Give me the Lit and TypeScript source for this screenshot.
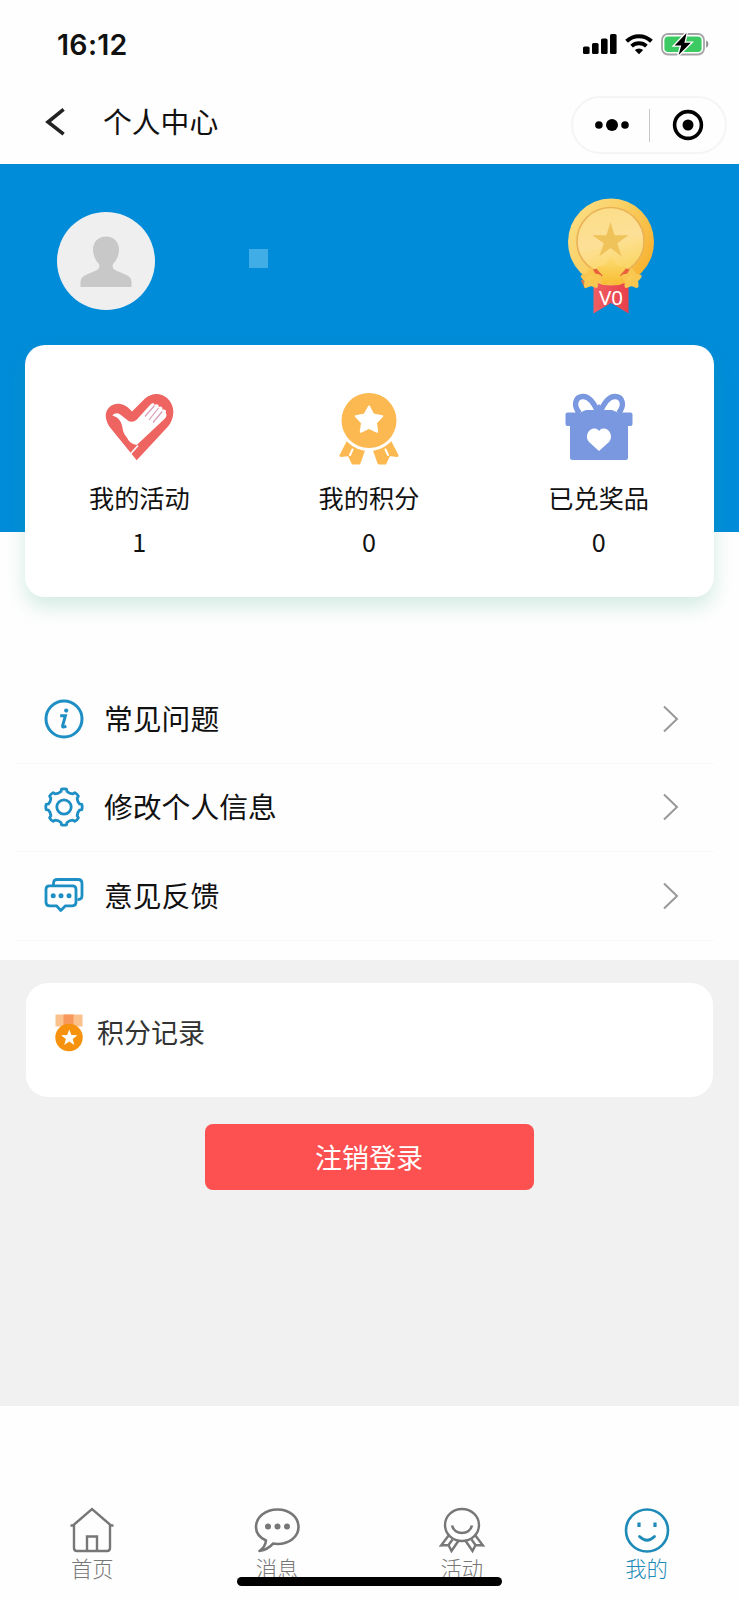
import { LitElement, html, css, svg } from "lit";
import { customElement } from "lit/decorators.js";

const star = (cx: number, cy: number, R: number, r = R * 0.42) => {
  const pts: string[] = [];
  for (let i = 0; i < 10; i++) {
    const a = -Math.PI / 2 + (i * Math.PI) / 5;
    const q = i % 2 ? r : R;
    pts.push(`${(cx + q * Math.cos(a)).toFixed(2)},${(cy + q * Math.sin(a)).toFixed(2)}`);
  }
  return pts.join(" ");
};

const gearPath = (() => {
  let d = "";
  for (let i = 0; i < 8; i++) {
    const at = (deg: number, q: number) => {
      const a = ((i * 45 + deg - 90) * Math.PI) / 180;
      return `${(20 + q * Math.cos(a)).toFixed(2)} ${(20 + q * Math.sin(a)).toFixed(2)}`;
    };
    d += `${i ? "L" : "M"}${at(-8, 18)} Q${at(0, 18.6)} ${at(8, 18)} L${at(11, 15.8)} Q${at(22.5, 14.4)} ${at(34, 15.8)} `;
  }
  return d + "Z";
})();

const signal = svg`<svg width="34" height="22" viewBox="0 0 34 22">
  <rect x="0" y="13.5" width="6.600" height="7.5" rx="1.6"/><rect x="9" y="10" width="6.600" height="11" rx="1.6"/>
  <rect x="18" y="5.5" width="6.600" height="15.5" rx="1.6"/><rect x="27" y="1" width="6.600" height="20" rx="1.6"/></svg>`;

const wifi = svg`<svg width="28" height="22" viewBox="0 0 28 22" fill="none" stroke="#000">
  <path d="M1.6 8.2a17.8 17.8 0 0 1 24.8 0" stroke-width="4"/>
  <path d="M6.6 13.2a10.8 10.8 0 0 1 14.8 0" stroke-width="3.8"/>
  <path d="M14 21.2l-4.2-4.1a6 6 0 0 1 8.4 0z" fill="#000" stroke="none"/></svg>`;

const battery = svg`<svg width="48" height="24" viewBox="0 0 48 24">
  <rect x="1" y="2" width="42" height="20.5" rx="6" fill="#fff" stroke="#a6a6a6" stroke-width="1.8"/>
  <rect x="3.4" y="4.4" width="37.2" height="15.7" rx="3.8" fill="#3ccb62"/>
  <path d="M45.2 8.6c2.8.9 2.8 6.2 0 7.2z" fill="#8d8d8d"/>
  <path d="M25.6 1L13.6 13.4h6.6L17.6 23 29.8 10.8h-6.4z" fill="#000" stroke="#fff" stroke-width="2.6" paint-order="stroke"/></svg>`;

const back = svg`<svg class="back" width="20" height="30" viewBox="0 0 20 30" fill="none" stroke="#222" stroke-width="3.6">
  <path d="M18.6 2.4L3 15l15.6 12.2"/></svg>`;

const more = svg`<svg width="34" height="14" viewBox="0 0 34 14"><circle cx="3.9" cy="7" r="3.8"/><circle cx="17" cy="7" r="6"/><circle cx="30" cy="7" r="3.8"/></svg>`;
const target = svg`<svg width="32" height="32" viewBox="0 0 32 32"><circle cx="16" cy="16" r="13.4" fill="none" stroke="#000" stroke-width="3.6"/><circle cx="16" cy="16" r="5.5"/></svg>`;

const person = svg`<svg width="52" height="52" viewBox="0 0 52 52" fill="#c8c8c8">
  <path d="M26 .5c8 0 13 5.700 13 13 0 6-2.600 11-6 14.500-1 3.500 0 5 3 6.500l10.500 4.500c3.500 1.700 5 4 5 7.500v4.500H.500V46.500c0-3.500 1.500-5.800 5-7.500L16 34.500c3-1.500 4-3 3-6.500-3.400-3.500-6-8.500-6-14.500 0-7.300 5-13 13-13z"/></svg>`;

const vipMedal = svg`<svg width="88" height="118" viewBox="0 0 88 118">
  <defs>
    <linearGradient id="rim" x1="0" y1="0" x2="1" y2="0.6"><stop offset="0" stop-color="#fbe08a"/><stop offset=".5" stop-color="#fad065"/><stop offset="1" stop-color="#f7b434"/></linearGradient>
    <linearGradient id="face" x1="0" y1="0" x2="0.3" y2="1"><stop offset="0" stop-color="#fbdc85"/><stop offset=".6" stop-color="#fde097"/><stop offset="1" stop-color="#fbd768"/></linearGradient>
    <linearGradient id="gold" x1="0" y1="0" x2="1" y2="1"><stop offset="0" stop-color="#fbd96a"/><stop offset="1" stop-color="#f7bd3d"/></linearGradient>
    <linearGradient id="gold-mid" x1="0" y1="0" x2="0" y2="1"><stop offset="0" stop-color="#fbd96e"/><stop offset="1" stop-color="#f8bf34"/></linearGradient>
    <linearGradient id="band" x1="0" y1="0" x2="1" y2="0"><stop offset="0" stop-color="#ef5f62"/><stop offset="1" stop-color="#e9404b"/></linearGradient>
  </defs>
  <path d="M26.500 82h35v33.500L44 105 26.500 115.500z" fill="url(#band)"/>
  <ellipse cx="44" cy="44" rx="43" ry="43.500" fill="url(#rim)"/>
  <circle cx="43.500" cy="43" r="33.500" fill="url(#face)" stroke="#eab256" stroke-width="1.600"/>
  <polygon points="${star(43.500, 43, 19, 7)}" fill="#efc25a"/>
  <path d="M25 72l8-2.500 5 6-6 5zM64 72l-8-2.500-5 6 6 5z" fill="#e8603c"/>
  <path d="M15 82l4 8" stroke="#dd7a4a" stroke-width="2.500"/>
  <g stroke-width="4" stroke-linejoin="round">
    <polygon points="${star(44.200, 74.500, 13, 7)}" fill="url(#gold-mid)" stroke="url(#gold-mid)"/>
    <polygon points="${star(24, 81, 8.600, 4.800)}" fill="url(#gold)" stroke="#f9c650"/>
    <polygon points="${star(64.500, 81, 8.600, 4.800)}" fill="url(#gold)" stroke="#f9c650"/>
  </g></svg>`;

const heartHand = svg`<svg class="stat-icon" width="74" height="74" viewBox="0 0 74 74">
  <path d="M34.700 68.300L7.700 35C-1 22 6 12 16 11.700 22 11.500 26.500 15.500 30 19.500L43 6.500C50 .5 58.500.5 65 6c8 7 8.500 19.500 1 28.500z" fill="#ee6460"/>
  <path d="M10.400 23.500c2-2.500 5-3 7.500-1.200l9 7c3.600 1.200 7-.3 9.600-3.600L48.500 12.500c1.800-2 4.500-1.500 4 .6 2.300-1.800 5-.3 4 1.900 2.500-1.500 5 .5 3.700 2.700 2.700-.9 4.800 1 3.500 3.300 1.500 1.500.8 4-1 5.800L34.700 53c-5-1.200-8-3.200-9.500-7-2.500-3-4-5.500-4.500-9C20 31 17.500 25.500 10.400 23.500z" fill="#fff"/>
  <path d="M52.500 13.500L43 24.500M56.500 16l-9.500 12M60.200 19.500L51 30.500" stroke="#d79cb6" stroke-width="1.200" fill="none"/>
  <path d="M36 53.500L28 62.500" stroke="#fff" stroke-width="1.600"/></svg>`;

const ribbon = svg`<svg class="stat-icon" width="74" height="74" viewBox="0 0 74 74">
  <g fill="#fdb951" stroke="#fdb951" stroke-width="3" stroke-linejoin="round">
    <path d="M16 50L9 63.500l8-1L21 71h6l5-14z"/><path d="M58 50l7 13.500-8-1L53 71h-6l-5-14z"/></g>
  <path d="M18 63l2.500-5.500M56 63l-2.500-5.500" stroke="#fff" stroke-width="2" stroke-linecap="round"/>
  <circle cx="37" cy="29" r="30" fill="#fff"/><circle cx="37" cy="28.500" r="27.500" fill="#fdb951"/>
  <polygon points="${star(37, 28.500, 14, 7.300)}" fill="#fff" stroke="#fff" stroke-width="2" stroke-linejoin="round"/></svg>`;

const gift = svg`<svg class="stat-icon" width="74" height="74" viewBox="0 0 74 74">
  <g fill="#fff" stroke="#7a98e0" stroke-width="5.400"><path d="M36 20C32 11 26.500 4 20.500 4.500 13 5 11 14 17.500 21"/><path d="M38 20C42 11 47.500 4 53.500 4.500 61 5 63 14 56.500 21"/></g>
  <path d="M3.500 22.500q0-2 2-2H18l6-2.500h8l5-6 5 6h8l6 2.500h12.500q2 0 2 2V32q0 2-2 2H66v31.500q0 2.500-2.500 2.500h-53Q8 68 8 65.500V34H5.500q-2 0-2-2z" fill="#7a98e0"/>
  <path d="M37 59L27 50c-5-6 0-14.500 6.500-13.500q2.500.500 3.500 2.500 1-2 3.500-2.500C47 35.500 52 44 47 50z" fill="#fff"/></svg>`;

const info = svg`<svg width="40" height="40" viewBox="0 0 40 40"><circle cx="20" cy="20" r="18" fill="none" stroke="#1d8fc4" stroke-width="3"/>
  <circle cx="22.200" cy="11.600" r="2.100" fill="#1d8fc4"/><path d="M16.200 16.800h5.200l-2.800 10q-.4 2.300 3.700.2" fill="none" stroke="#1d8fc4" stroke-width="3"/></svg>`;
const gear = svg`<svg width="40" height="40" viewBox="0 0 40 40" fill="none" stroke="#1d8fc4" stroke-width="2.800" stroke-linejoin="round"><path d="${gearPath}"/><circle cx="20" cy="20" r="7.200"/></svg>`;
const feedback = svg`<svg width="40" height="40" viewBox="0 0 40 40" fill="none" stroke="#1d8fc4" stroke-width="2.800" stroke-linejoin="round">
  <path d="M9.500 9V7.500q0-4 4-4H34q4 0 4 4v12q0 4-4 4h-.5"/><path d="M5.500 9.800h23q3.500 0 3.500 3.500v13q0 3.500-3.500 3.500H21.500L16.800 34.500 12.500 29.800h-7Q2 29.800 2 26.300v-13q0-3.500 3.500-3.500z"/>
  <g fill="#1d8fc4" stroke="none"><circle cx="9.200" cy="19.800" r="2.500"/><circle cx="17" cy="19.800" r="2.500"/><circle cx="25" cy="19.800" r="2.500"/></g></svg>`;
const chevron = svg`<svg width="18" height="30" viewBox="0 0 18 30" fill="none" stroke="#999" stroke-width="2"><path d="M2 2.500L15 15 2 27.500"/></svg>`;

const record = svg`<svg width="28" height="38" viewBox="0 0 28 38">
  <path d="M.5.500h27v12H.500z" fill="#fbc18c"/><path d="M8.500.500h10v12h-10z" fill="#f8985a"/>
  <circle cx="14" cy="23.500" r="13.700" fill="#f6920e"/><polygon points="${star(14.300, 24, 8.600, 3.600)}" fill="#fff"/></svg>`;

const home = svg`<svg width="46" height="46" viewBox="0 0 46 46" fill="none" stroke="currentColor" stroke-width="2.400">
  <path d="M1.500 18.500H4L23 2l19 16.500h2.500M5 18v23q0 3 3 3h30q3 0 3-3V18M18 44V29.500h10V44"/></svg>`;
const chat = svg`<svg width="46" height="46" viewBox="0 0 46 46" fill="none" stroke="currentColor" stroke-width="2.600" stroke-linejoin="round">
  <path d="M12 33.500C5.500 30.500 2 25.500 2 20 2 10 11.500 2.500 23.500 2.500S44.500 10 44.500 20 35 37 23.500 37q-2.500 0-4.500-.4Q14 42.500 5.500 44q6-4.500 6.500-10.500z"/>
  <g fill="currentColor" stroke="none"><circle cx="14" cy="19.500" r="3"/><circle cx="23.500" cy="19.500" r="3"/><circle cx="33" cy="19.500" r="3"/></g></svg>`;
const badge = svg`<svg width="46" height="46" viewBox="0 0 46 46" fill="none" stroke="currentColor" stroke-width="2.400">
  <ellipse cx="23" cy="18" rx="17" ry="16"/><path d="M13 18.500c2.500 10 17.500 10 20 0" stroke-width="2.700"/>
  <path d="M10 28L2 38.500l7.500-.5L12.500 44 20 33M36 28l8 10.500-7.500-.5L33.500 44 26 33M9.500 38l4-5.500M36.500 38l-4-5.500"/></svg>`;
const smile = svg`<svg width="46" height="46" viewBox="0 0 46 46" fill="none" stroke="currentColor" stroke-width="2.600">
  <circle cx="23" cy="23.500" r="21"/><path d="M15.500 29.500q7.500 7.500 15 0" stroke-width="2.800" stroke-linecap="round"/>
  <path d="M15 15.500v4.500M31 15.500v4.500" stroke-width="3.200"/></svg>`;

@customElement("app-root")
export class AppRoot extends LitElement {
  private stats = [
    { icon: heartHand, label: "我的活动", value: 1 },
    { icon: ribbon, label: "我的积分", value: 0 },
    { icon: gift, label: "已兑奖品", value: 0 },
  ];
  private rows = [
    { icon: info, label: "常见问题" },
    { icon: gear, label: "修改个人信息" },
    { icon: feedback, label: "意见反馈" },
  ];
  private tabs = [
    { icon: home, label: "首页", on: false },
    { icon: chat, label: "消息", on: false },
    { icon: badge, label: "活动", on: false },
    { icon: smile, label: "我的", on: true },
  ];

  static styles = css`
    :host { display: flex; flex-direction: column; position: relative; box-sizing: border-box; width: 739px; height: 1600px; overflow: hidden;
      background: #fefefe; color: #111; font-family: "Noto Sans CJK SC", sans-serif; }
    * { box-sizing: border-box; }
    svg { display: block; flex: none; }
    .status { display: flex; align-items: center; height: 88px; padding: 0 30px 0 57px; }
    .time { flex: 1; font: 600 28.500px/34px Inter, sans-serif; letter-spacing: 0.300px; padding-top: 1px; }
    .signals { display: flex; align-items: center; gap: 8px; }
    .nav { display: flex; align-items: flex-start; height: 76px; padding: 8px 12px 0 45px; }
    .back { margin-top: 11px; }
    .title { flex: 1; margin: 5px 0 0 38px; font-size: 28.800px; line-height: 40px; }
    .capsule { display: flex; align-items: center; width: 156px; height: 58px; border: 2px solid #f5f5f5; border-radius: 29px; padding-left: 22px; }
    .divider { width: 1px; height: 33px; margin: 0 22px 0 20px; background: #c8c8c8; }
    .hero { height: 368px; flex: none; background: #018cda; padding: 34px 84px 0 57px; display: flex; align-items: flex-start; }
    .avatar { display: grid; place-items: center; width: 98px; height: 98px; margin-top: 14px; padding-top: 1px; border-radius: 50%; background: #efefef; }
    .chip { width: 19px; height: 19px; margin: 51px auto 0 94px; background: #41ade6; }
    .vip { display: grid; }
    .vip > * { grid-area: 1 / 1; }
    .level { align-self: end; justify-self: center; margin-bottom: 5px; font: 400 20.500px/28px "Noto Sans", sans-serif; color: #fff; }
    .card { flex: none; display: grid; grid-template-columns: repeat(3, 1fr); width: 689px; height: 252px; margin: -187px 0 0 25px; position: relative;
      background: #fff; border-radius: 20px; box-shadow: 0 10px 20px rgba(40, 160, 115, 0.2); }
    .stat { display: flex; flex-direction: column; align-items: center; padding: 47px 1px 0 0; font-size: 25.200px; }
    .label { margin-top: 13px; line-height: 36px; }
    .value { margin-top: 8px; line-height: 36px; }
    .list { flex: none; height: 363px; padding: 78px 25px 0 15px; }
    .row { display: flex; align-items: center; height: 88.500px; padding: 0 34px 0 29px; border-bottom: 1px solid #f8f8f8; font-size: 28.800px; }
    .name { flex: 1; margin-left: 20px; padding-bottom: 2px; line-height: 40px; }
    .body { flex: none; height: 446px; padding: 23px 26px 0; background: #f1f1f1; }
    .record { display: flex; align-items: flex-start; gap: 14px; height: 114px; padding: 31px 29px 0; background: #fff; border-radius: 22px; color: #333; }
    .record-name { margin-top: -1px; font-size: 27px; line-height: 38px; }
    .logout { display: block; width: 329px; height: 66px; margin: 27px auto 0; border: 0; border-radius: 8px; background: #fd5050; color: #fff; font: 27px/66px "Noto Sans CJK SC", sans-serif; padding: 0 1px 0 0; }
    .tabs { flex: 1; display: grid; grid-template-columns: repeat(4, 1fr); padding-top: 101px; }
    .tab { display: flex; flex-direction: column; align-items: center; color: #777; font-size: 21.300px; line-height: 30px; font-weight: 300; }
    .on { color: #1e8ab8; }
    .bar { position: absolute; left: 237px; bottom: 14px; width: 265px; height: 9px; border-radius: 5px; background: #000; }
  `;

  render() {
    return html`
      <div class="status"><span class="time">16:12</span><div class="signals">${signal}${wifi}${battery}</div></div>
      <div class="nav">${back}<span class="title">个人中心</span><div class="capsule">${more}<i class="divider"></i>${target}</div></div>
      <div class="hero">
        <div class="avatar">${person}</div><div class="chip"></div>
        <div class="vip">${vipMedal}<span class="level">V0</span></div>
      </div>
      <div class="card">
        ${this.stats.map((s) => html`<div class="stat">${s.icon}<span class="label">${s.label}</span><span class="value">${s.value}</span></div>`)}
      </div>
      <div class="list">
        ${this.rows.map((r) => html`<div class="row">${r.icon}<span class="name">${r.label}</span>${chevron}</div>`)}
      </div>
      <div class="body">
        <div class="record">${record}<span class="record-name">积分记录</span></div>
        <button class="logout">注销登录</button>
      </div>
      <div class="tabs">
        ${this.tabs.map((t) => html`<div class="tab ${t.on ? "on" : ""}">${t.icon}<span>${t.label}</span></div>`)}
      </div>
      <div class="bar"></div>
    `;
  }
}
